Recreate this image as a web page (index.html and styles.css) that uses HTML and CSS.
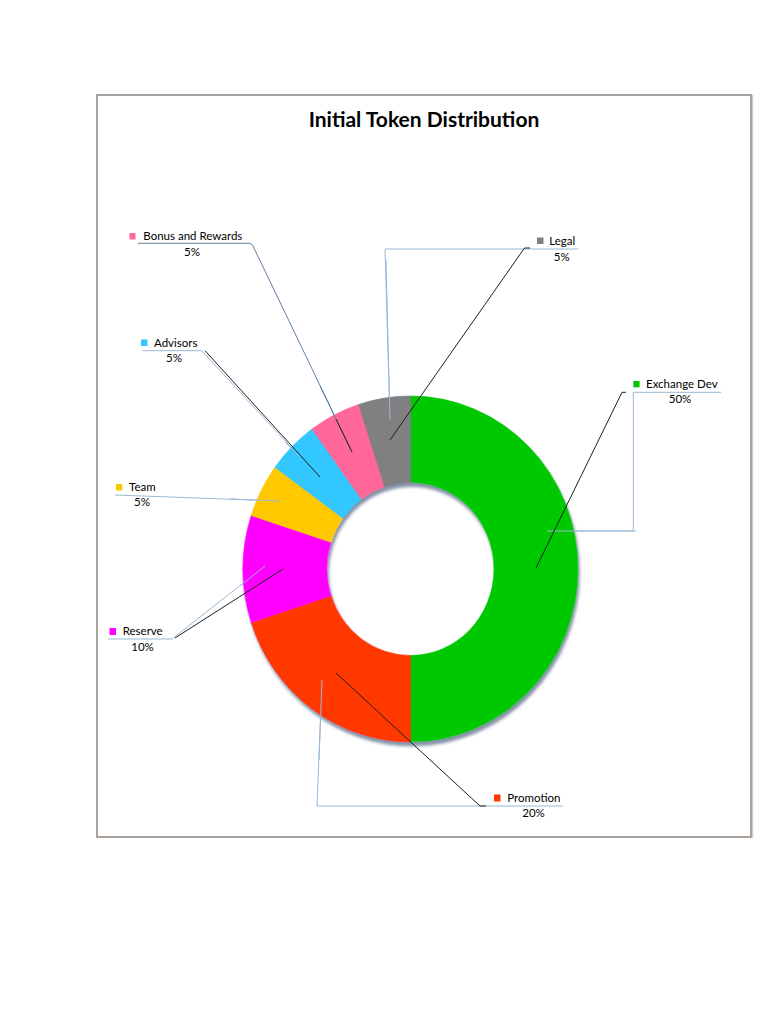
FILE: index.html
```html
<!DOCTYPE html>
<html lang="en">
<head>
<meta charset="utf-8">
<title>Initial Token Distribution</title>
<link rel="stylesheet" href="styles.css">
</head>
<body>
<main class="page">
  <section class="chart-frame">
    <h1 class="chart-title">Initial Token Distribution</h1>
    <svg class="chart" viewBox="98 140 652 696" xmlns="http://www.w3.org/2000/svg">
      <defs>
        <filter id="shadow" x="-10%" y="-10%" width="130%" height="130%">
          <feDropShadow dx="1.5" dy="4" stdDeviation="1.6" flood-color="#6f7f98" flood-opacity="0.85"/>
        </filter>
      </defs>

      <!-- leader lines (light) -->
      <g class="lead-blue">
        <polyline class="lead-strong" points="138,243.3 250,243.3 252.5,245 352,452"/>
        <polyline points="578,249 385,249 390,420"/>
        <polyline points="721,392.3 633.3,392.3 633.3,531 547,531"/>
        <polyline points="142.7,350.7 201.7,350.7 300,457"/>
        <polyline points="115,495 280,501"/>
        <polyline points="108,639 172,639 265,566"/>
        <polyline points="563,806 317,806 322,680"/>
      </g>

      <!-- donut -->
      <g class="donut" filter="url(#shadow)">
        <path class="s-exchange" d="M410.5,396 A167.5,173 0 0 1 410.5,742 L410.5,655.5 A83.5,86.5 0 0 0 410.5,482.5 Z"/>
        <path class="s-promotion" d="M410.5,742 A167.5,173 0 0 1 251.2,622.46 L331.09,595.73 A83.5,86.5 0 0 0 410.5,655.5 Z"/>
        <path class="s-reserve" d="M251.2,622.46 A167.5,173 0 0 1 251.2,515.54 L331.09,542.27 A83.5,86.5 0 0 0 331.09,595.73 Z"/>
        <path class="s-team" d="M251.2,515.54 A167.5,173 0 0 1 274.99,467.31 L342.95,518.16 A83.5,86.5 0 0 0 331.09,542.27 Z"/>
        <path class="s-advisors" d="M274.99,467.31 A167.5,173 0 0 1 312.05,429.04 L361.42,499.02 A83.5,86.5 0 0 0 342.95,518.16 Z"/>
        <path class="s-bonus" d="M312.05,429.04 A167.5,173 0 0 1 358.74,404.47 L384.7,486.73 A83.5,86.5 0 0 0 361.42,499.02 Z"/>
        <path class="s-legal" d="M358.74,404.47 A167.5,173 0 0 1 410.5,396 L410.5,482.5 A83.5,86.5 0 0 0 384.7,486.73 Z"/>
      </g>

      <!-- light lines visible over slices -->
      <g class="lead-blue">
        <line x1="386" y1="260" x2="390" y2="420"/>
        <line x1="547" y1="531" x2="636" y2="531"/>
        <line x1="230" y1="499" x2="280" y2="501"/>
        <line x1="240" y1="586" x2="265" y2="566"/>
        <line x1="319" y1="760" x2="322" y2="680"/>
        <line x1="285" y1="442" x2="300" y2="457"/>
        <line class="lead-strong" x1="320" y1="386" x2="352" y2="452"/>
      </g>

      <!-- leader lines (dark) -->
      <g class="lead-dark">
        <polyline points="336,419 352,452"/>
        <polyline points="530,248 524.5,248 390,440"/>
        <polyline points="626,392.3 622,392.3 536,568"/>
        <polyline points="205,350.7 320,477"/>
        <polyline points="175,638 283,569"/>
        <polyline points="486,806 480,806 336,673"/>
      </g>

      <!-- labels -->
      <g class="labels">
        <rect class="m-bonus" x="129.5" y="233" width="6" height="6.5"/>
        <text x="143.3" y="240">Bonus and Rewards</text>
        <text class="pct" x="192" y="255.7">5%</text>

        <rect class="m-legal" x="537" y="237.5" width="6.5" height="6.5"/>
        <text x="549.3" y="245">Legal</text>
        <text class="pct" x="561.7" y="260.7">5%</text>

        <rect class="m-exchange" x="633.3" y="381" width="6.3" height="6.3"/>
        <text x="646" y="388.3">Exchange Dev</text>
        <text class="pct" x="680" y="403.3">50%</text>

        <rect class="m-advisors" x="141" y="339.5" width="6.5" height="6.5"/>
        <text x="154" y="346.7">Advisors</text>
        <text class="pct" x="174" y="362.3">5%</text>

        <rect class="m-team" x="116" y="484" width="6.3" height="6.5"/>
        <text x="129" y="491">Team</text>
        <text class="pct" x="142" y="506">5%</text>

        <rect class="m-reserve" x="109.5" y="628" width="6.5" height="7"/>
        <text x="122.7" y="635">Reserve</text>
        <text class="pct" x="142.5" y="651">10%</text>

        <rect class="m-promotion" x="494" y="794.5" width="6.5" height="7"/>
        <text x="507.3" y="802.3">Promotion</text>
        <text class="pct" x="533.5" y="817.3">20%</text>
      </g>
    </svg>
  </section>
</main>
</body>
</html>
```

FILE: styles.css
```css
html, body {
  margin: 0;
  padding: 0;
  background: #ffffff;
}

.page {
  padding: 94px 0 0 96px;
}

.chart-frame {
  width: 652px;
  height: 740px;
  border: 2px solid #aaa29c;
  box-shadow: 1px 1px 1px rgba(120, 110, 100, 0.35);
  display: flex;
  flex-direction: column;
  background: #ffffff;
}

.chart-title {
  margin: 0;
  padding: 11px 0 9px;
  height: 24px;
  text-align: center;
  font-family: Lato, "Liberation Sans", sans-serif;
  font-weight: 700;
  font-size: 21px;
  line-height: 24px;
  color: #000000;
}

.chart {
  display: block;
  width: 652px;
  height: 696px;
}

.lead-blue polyline,
.lead-blue line {
  fill: none;
  stroke: #9ab8d6;
  stroke-width: 1;
}

.lead-blue .lead-strong {
  stroke: #5f7fa2;
}

.lead-dark polyline {
  fill: none;
  stroke: #1f1f1f;
  stroke-width: 1;
}

.donut path {
  stroke-width: 0.7;
  stroke-linejoin: round;
}

.s-exchange, .m-exchange { fill: #00c800; stroke: #00c800; }
.s-promotion, .m-promotion { fill: #ff3700; stroke: #ff3700; }
.s-reserve, .m-reserve { fill: #ff00ff; stroke: #ff00ff; }
.s-team, .m-team { fill: #ffc800; stroke: #ffc800; }
.s-advisors, .m-advisors { fill: #33c8ff; stroke: #33c8ff; }
.s-bonus, .m-bonus { fill: #ff6699; stroke: #ff6699; }
.s-legal, .m-legal { fill: #808080; stroke: #808080; }

.labels rect {
  stroke: none;
}

.labels text {
  font-family: Lato, "Liberation Sans", sans-serif;
  font-size: 11.5px;
  fill: #000000;
}

.labels text.pct {
  text-anchor: middle;
}
```
